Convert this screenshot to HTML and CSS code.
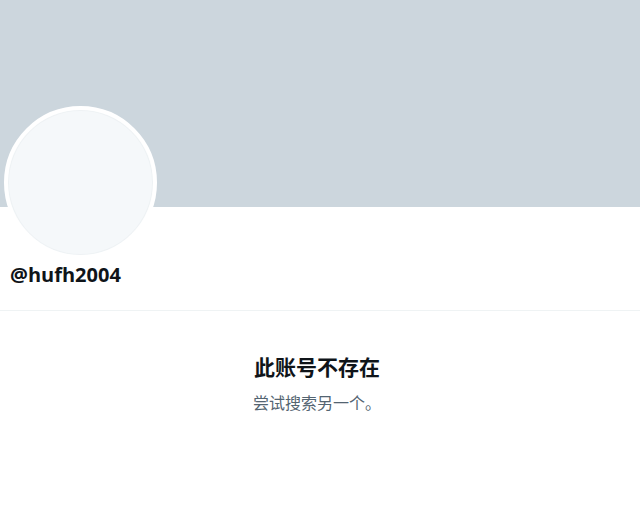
FILE: index.html
```html
<!DOCTYPE html>
<html lang="zh-CN">
<head>
  <meta charset="UTF-8">
  <title>@hufh2004</title>
  <link rel="stylesheet" href="styles.css">
</head>
<body>
  <div class="banner"></div>
  <div class="profile">
    <div class="avatar"></div>
    <div class="handle">@hufh2004</div>
  </div>
  <div class="empty">
    <h2>此账号不存在</h2>
    <p>尝试搜索另一个。</p>
  </div>
</body>
</html>
```

FILE: styles.css
```css
body {
  margin: 0;
  background: #fff;
  font-family: "Open Sans", "Noto Sans CJK SC", sans-serif;
  color: #0f1419;
}
.banner {
  height: 207px;
  background: #ccd6dd;
}
.profile {
  display: flex;
  flex-direction: column;
  align-items: flex-start;
  padding: 0 10px 0 4px;
  height: 103px;
  border-bottom: 1px solid #eff3f4;
}
.avatar {
  width: 145px;
  height: 145px;
  margin-top: -101px;
  border: 4px solid #fff;
  border-radius: 50%;
  background: #f5f8fa;
  box-shadow: inset 0 0 0 1px #eef2f4;
}
.handle {
  margin: 4px 0 0 6px;
  font-size: 20px;
  font-weight: 700;
  line-height: 24px;
}
.empty {
  text-align: center;
  padding: 42px 6px 0 0;
}
.empty h2 {
  margin: 0;
  font-size: 21px;
  font-weight: 700;
  line-height: 28px;
}
.empty p {
  margin: 12px 0 0;
  font-size: 16px;
  color: #536471;
  line-height: 20px;
}
```
